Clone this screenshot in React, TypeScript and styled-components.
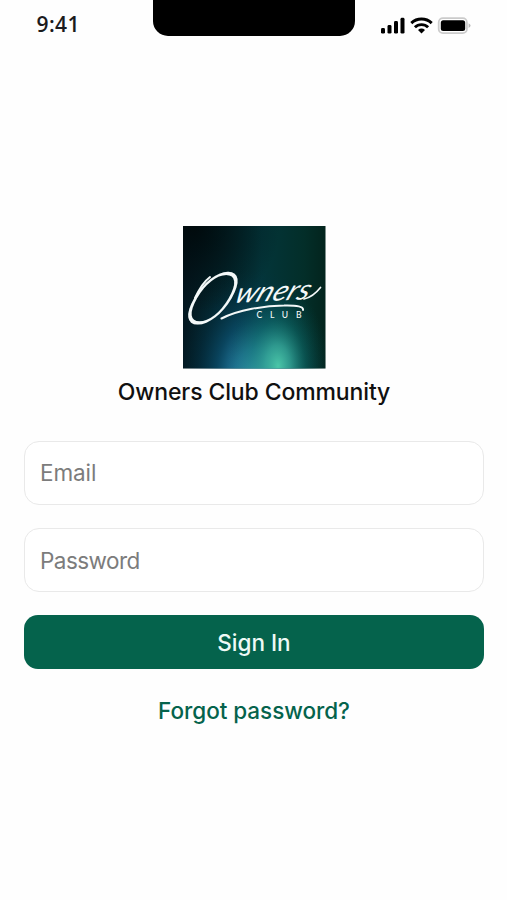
import React from "react";
import styled, { createGlobalStyle } from "styled-components";

const GlobalStyle = createGlobalStyle`
  * { box-sizing: border-box; }
  html, body { margin: 0; background: #fff; }
  body { font-family: Inter, "Liberation Sans", sans-serif; overflow: hidden; }
`;

const Screen = styled.main`
  width: 507px;
  height: 900px;
  background: #fefefe;
  display: flex;
  flex-direction: column;
`;

const StatusBar = styled.header`
  height: 50px;
  display: grid;
  grid-template-columns: 152.5px 202.5px 1fr;
  align-items: start;
`;

const Clock = styled.time`
  padding: 12px 0 0 36.5px;
  font: 600 21px/24px "Open Sans", sans-serif;
  letter-spacing: 0.4px;
  color: #1b1b1d;
`;

const Notch = styled.div`
  height: 35.5px;
  background: #000;
  border-radius: 0 0 15px 15px;
`;

const StatusIcons = styled.div`
  padding: 16px 0 0 25px;
  svg { display: block; }
`;

const Content = styled.section`
  padding: 176.4px 23px 0 24px;
  display: flex;
  flex-direction: column;
  align-items: center;
`;

const LogoFrame = styled.div`
  width: 142.5px;
  height: 142.6px;
  svg { display: block; overflow: visible; }
`;

const Title = styled.h1`
  margin: 8px 0 0;
  font-size: 23px;
  line-height: 30px;
  font-weight: 550;
  letter-spacing: -0.12px;
  color: #101010;
  white-space: nowrap;
`;

const Form = styled.form`
  margin-top: 33.8px;
  width: 100%;
  display: flex;
  flex-direction: column;
  gap: 23px;
`;

const Field = styled.input<{ $tracking: string }>`
  width: 100%;
  height: 64.2px;
  padding: 0 15px;
  border: 1.5px solid #e9e9e9;
  border-radius: 15px;
  background: #fff;
  font: 400 22.5px Inter, sans-serif;
  letter-spacing: ${(p) => p.$tracking};
  outline: none;
  &::placeholder { color: #7c7c7c; opacity: 1; }
`;

const SubmitButton = styled.button`
  height: 54px;
  border: 0;
  border-radius: 14px;
  background: #05634c;
  color: #effaf6;
  font: 500 22.5px Inter, sans-serif;
`;

const ForgotLink = styled.a`
  margin-top: 26.5px;
  font-size: 22.5px;
  line-height: 30px;
  font-weight: 550;
  color: #05634c;
  letter-spacing: -0.05px;
  text-decoration: none;
  white-space: nowrap;
`;

function DeviceStatus() {
  return (
    <svg width="94" height="20" viewBox="0 0 94 20">
      <g fill="#000">
        <rect x="1" y="12" width="4" height="5.6" rx="1.4" />
        <rect x="7.5" y="9" width="4" height="8.6" rx="1.4" />
        <rect x="14" y="5" width="4" height="12.6" rx="1.4" />
        <rect x="20.5" y="1.8" width="4" height="15.8" rx="1.4" />
        <path d="M41.5 17.5l-3.5-3.4a5.4 5.4 0 0 1 7 0z" />
      </g>
      <g fill="none" stroke="#000" strokeWidth="2.9">
        <path d="M31.3 7.1a14.8 14.8 0 0 1 20.4 0" />
        <path d="M34.9 11.3a9.4 9.4 0 0 1 13.2 0" />
      </g>
      <rect x="58.7" y="2.2" width="28.2" height="14.9" rx="4.2" fill="#fff" stroke="#cbcbcb" strokeWidth="1.8" />
      <rect x="60.8" y="4.2" width="24.4" height="10.9" rx="2.5" fill="#000" />
      <path d="M88.6 7.3q4 2.3 0 4.6z" fill="#b8b8b8" />
    </svg>
  );
}

function OwnersLogo() {
  return (
    <svg width="142.5" height="142.5" viewBox="0 0 142.5 142.5">
      <defs>
        <linearGradient id="base" x1="0" y1="0" x2="1" y2="0">
          <stop offset="0" stopColor="#031720" />
          <stop offset="0.55" stopColor="#03353a" />
          <stop offset="0.85" stopColor="#032e29" />
          <stop offset="1" stopColor="#03241d" />
        </linearGradient>
        <radialGradient id="blue" gradientUnits="userSpaceOnUse" cx="0" cy="0" r="1" gradientTransform="translate(71 150) scale(76 108)">
          <stop offset="0" stopColor="#45acce" />
          <stop offset="0.25" stopColor="#2680a6" stopOpacity="0.92" />
          <stop offset="0.5" stopColor="#0c5172" stopOpacity="0.7" />
          <stop offset="0.75" stopColor="#053a53" stopOpacity="0.35" />
          <stop offset="1" stopColor="#033039" stopOpacity="0" />
        </radialGradient>
        <radialGradient id="green" gradientUnits="userSpaceOnUse" cx="0" cy="0" r="1" gradientTransform="translate(95 140) scale(50 84)">
          <stop offset="0" stopColor="#4bc6a8" />
          <stop offset="0.25" stopColor="#35a894" stopOpacity="0.8" />
          <stop offset="0.55" stopColor="#107565" stopOpacity="0.45" />
          <stop offset="1" stopColor="#04443a" stopOpacity="0" />
        </radialGradient>
        <radialGradient id="shade" cx="0.08" cy="0" r="0.6">
          <stop offset="0" stopColor="#000607" stopOpacity="0.8" />
          <stop offset="1" stopColor="#000607" stopOpacity="0" />
        </radialGradient>
      </defs>
      <rect width="142.5" height="142.5" fill="url(#base)" />
      <rect width="142.5" height="142.5" fill="url(#blue)" />
      <rect width="142.5" height="142.5" fill="url(#green)" />
      <rect width="142.5" height="142.5" fill="url(#shade)" />
      <g fill="#f4f9f9" fontFamily="Lato, sans-serif">
        <text transform="translate(-7 98) skewX(-30)" fontSize="73" fontWeight="300" textLength="44" lengthAdjust="spacingAndGlyphs">O</text>
        <text transform="translate(50 77) rotate(-3) skewX(-26)" fontSize="28" fontStyle="italic" textLength="74" lengthAdjust="spacingAndGlyphs">wners</text>
        <text x="73.5" y="92.3" fontSize="8.6" fontWeight="500" textLength="45">CLUB</text>
      </g>
      <g fill="none" stroke="#f4f9f9" strokeLinecap="round">
        <path d="M38.5 92.5C55 84 82 79.5 101 79.5Q121 79 120 84" strokeWidth="2" />
        <path d="M27 51Q19 57 12 72" strokeWidth="2" />
        <path d="M121 73Q130 71 137.5 61.5" strokeWidth="1.7" />
      </g>
    </svg>
  );
}

export default function App() {
  return (
    <>
      <GlobalStyle />
      <Screen>
        <StatusBar>
          <Clock>9:41</Clock>
          <Notch />
          <StatusIcons><DeviceStatus /></StatusIcons>
        </StatusBar>
        <Content>
          <LogoFrame><OwnersLogo /></LogoFrame>
          <Title>Owners Club Community</Title>
          <Form onSubmit={(e) => e.preventDefault()}>
            <Field type="email" placeholder="Email" aria-label="Email" $tracking="-0.1px" />
            <Field type="password" placeholder="Password" aria-label="Password" $tracking="-0.55px" />
            <SubmitButton type="submit">Sign In</SubmitButton>
          </Form>
          <ForgotLink href="#">Forgot password?</ForgotLink>
        </Content>
      </Screen>
    </>
  );
}
